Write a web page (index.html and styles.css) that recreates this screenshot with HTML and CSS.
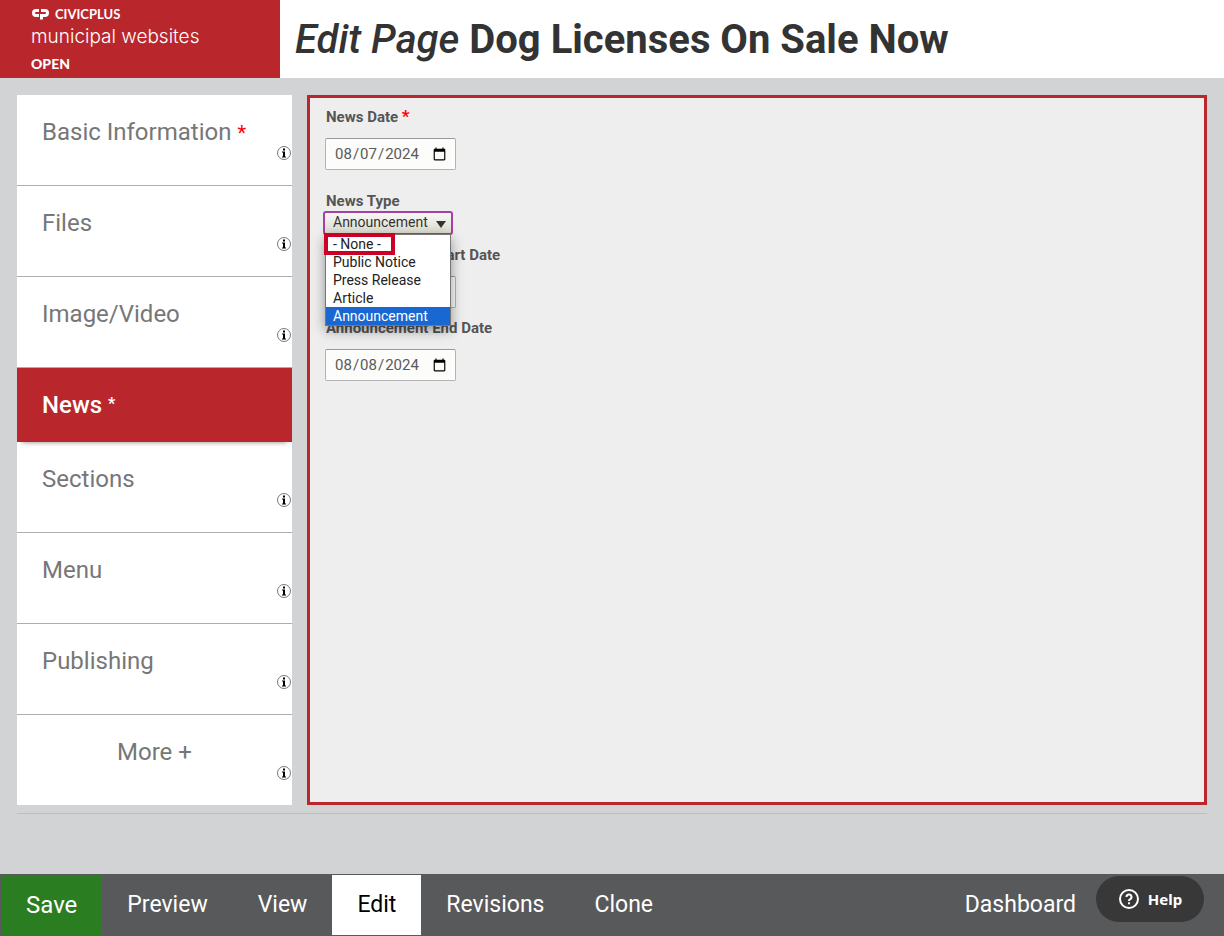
FILE: index.html
```html
<!DOCTYPE html>
<html lang="en">
<head>
    <meta charset="UTF-8">
    <meta name="viewport" content="width=device-width, initial-scale=1.0">
    <title>Edit Page Dog Licenses On Sale Now</title>
    <link rel="stylesheet" href="styles.css">
</head>
<body>
    <header class="header">
        <a class="brand" href="#">
            <span class="brand-top">
                <svg class="brand-icon" width="18" height="12" viewBox="0 0 18 12" aria-hidden="true">
                    <path d="M8 2.500H5a2.500 2.500 0 0 0 0 5h3M10 2.500h4a2.500 2.500 0 0 1 0 5h-3.500V11.500" fill="none" stroke="#fff" stroke-width="3"/>
                </svg>
                CIVICPLUS
            </span>
            <span class="brand-name">municipal websites</span>
            <span class="brand-open">OPEN</span>
        </a>
        <h1 class="title"><em>Edit Page</em> Dog Licenses On Sale Now</h1>
    </header>

    <main class="main">
        <div class="columns">
            <nav class="tabs">
                <a class="tab" href="#"><span>Basic Information <span class="required">*</span></span><svg class="info"><use href="#info"/></svg></a>
                <a class="tab" href="#">Files<svg class="info"><use href="#info"/></svg></a>
                <a class="tab" href="#">Image/Video<svg class="info"><use href="#info"/></svg></a>
                <a class="tab active" href="#"><span>News <span class="star">*</span></span></a>
                <a class="tab" href="#">Sections<svg class="info"><use href="#info"/></svg></a>
                <a class="tab" href="#">Menu<svg class="info"><use href="#info"/></svg></a>
                <a class="tab" href="#">Publishing<svg class="info"><use href="#info"/></svg></a>
                <a class="tab more" href="#">More +<svg class="info"><use href="#info"/></svg></a>
            </nav>

            <form class="panel" id="page-form">
                <div class="field first">
                    <label for="news-date">News Date <span class="required">*</span></label>
                    <input type="date" id="news-date" value="2024-08-07">
                </div>
                <div class="field">
                    <label for="news-type">News Type</label>
                    <div class="select-wrap">
                        <select id="news-type">
                            <option>- None -</option>
                            <option>Public Notice</option>
                            <option>Press Release</option>
                            <option>Article</option>
                            <option selected>Announcement</option>
                        </select>
                        <svg class="arrow" width="10" height="7" viewBox="0 0 10 7"><path d="M0 0h10L5 7z" fill="#333"/></svg>
                        <ul class="options" role="listbox" aria-label="News Type">
                            <li class="boxed" role="option">- None -</li>
                            <li role="option">Public Notice</li>
                            <li role="option">Press Release</li>
                            <li role="option">Article</li>
                            <li class="selected" role="option" aria-selected="true">Announcement</li>
                        </ul>
                    </div>
                </div>
                <div class="field">
                    <label for="start-date">Announcement Start Date</label>
                    <input type="date" id="start-date" value="2024-08-07">
                </div>
                <div class="field">
                    <label for="end-date">Announcement End Date</label>
                    <input type="date" id="end-date" value="2024-08-08">
                </div>
            </form>
        </div>
        <hr class="divider">
    </main>

    <footer class="toolbar">
        <button class="save" type="submit" form="page-form">Save</button>
        <a href="#">Preview</a>
        <a href="#">View</a>
        <a class="current" href="#">Edit</a>
        <a href="#">Revisions</a>
        <a href="#">Clone</a>
        <a class="dashboard" href="#">Dashboard</a>
        <button class="help" type="button">
            <svg width="22" height="22" viewBox="0 0 22 22" fill="none" stroke="#fff" stroke-width="2" aria-hidden="true">
                <circle cx="11" cy="11" r="9"/>
                <path d="M8.500 9a2.500 2.500 0 1 1 3.700 2.200c-.8.400-1.200.8-1.200 1.800"/>
                <path d="M11 14.300v2"/>
            </svg>
            Help
        </button>
    </footer>

    <svg class="symbols">
        <symbol id="info" viewBox="0 0 14 14">
            <circle cx="7" cy="7" r="6.500" fill="#fff" stroke="#555" stroke-width="0.800"/>
            <path d="M6 2.500h2v2H6zM5 5.500h3v5h1v1H5v-1h1v-4H5z" fill="#000"/>
        </symbol>
    </svg>
</body>
</html>
```
FILE: styles.css
```css
* {
    box-sizing: border-box;
}
body {
    margin: 0;
    min-height: 100vh;
    display: flex;
    flex-direction: column;
    background-color: #d1d3d4;
    font-family: Roboto, "Liberation Sans", sans-serif;
    color: #333;
}
a {
    text-decoration: none;
}
.header {
    display: flex;
    background-color: #fff;
}
.brand {
    width: 280px;
    padding: 6px 0 0 31px;
    display: flex;
    flex-direction: column;
    background-color: #b9272c;
    color: #fff;
    font-family: Lato, sans-serif;
}
.brand-top {
    display: flex;
    align-items: center;
    gap: 6px;
    font-size: 13px;
    font-weight: bold;
    line-height: 16px;
}
.brand-name {
    font-family: Inter, sans-serif;
    font-weight: 300;
    font-size: 19px;
    line-height: 30px;
}
.brand-open {
    margin-top: 4px;
    font-size: 14px;
    font-weight: 900;
    line-height: 16px;
}
.title {
    margin: 0;
    padding: 2px 0 0 15px;
    font-size: 40px;
    font-weight: bold;
    line-height: 76px;
}
.title em {
    font-weight: 500;
}
.main {
    padding: 17px 17px 0;
}
.columns {
    display: flex;
    gap: 15px;
}
.tabs {
    width: 275px;
    background-color: #fff;
}
.tab {
    display: flex;
    flex-direction: column;
    padding: 23px 25px 25px;
    border-bottom: 1px solid #adadad;
    color: #777;
    font-size: 24px;
    line-height: 28px;
}
.tab:last-child {
    border-bottom: none;
}
.info {
    width: 14px;
    height: 14px;
    align-self: flex-end;
    margin-right: -24px;
}
.active {
    padding-bottom: 23px;
    border-bottom: none;
    background-color: #b9272c;
    color: #fff;
    font-weight: 500;
    box-shadow: 0 5px 5px -5px rgba(0,0,0,0.5);
}
.more {
    text-align: center;
}
.required {
    color: #f00;
    line-height: 1;
}
.tab .required {
    font-size: 20px;
}
.star {
    font-size: 16px;
    font-weight: bold;
    line-height: 1;
    vertical-align: 4px;
}
.panel {
    flex: 1;
    padding: 10px 15px;
    border: 3px solid #b9272c;
    background-color: #eee;
}
.field {
    margin-bottom: 11px;
}
.first {
    margin-bottom: 22px;
}
.field label {
    display: block;
    padding-left: 1px;
    color: #555;
    font-size: 15px;
    font-weight: bold;
    line-height: 18px;
}
.field .required {
    font-size: 17px;
}
input[type="date"] {
    display: block;
    width: 131px;
    height: 32px;
    margin-top: 12px;
    padding: 0 6px 0 8px;
    border: 1px solid #b3b3b3;
    border-top-color: #999;
    border-radius: 2px;
    background-color: #fcfcfa;
    color: #5a5a5a;
    font-family: inherit;
    font-size: 15px;
}
.select-wrap {
    position: relative;
    width: 130px;
    margin: 1px 0 0 -2px;
}
select {
    display: block;
    width: 100%;
    height: 24px;
    padding: 0 8px 2px;
    appearance: none;
    border: 2px solid #a63fa6;
    border-radius: 3px;
    background: linear-gradient(#f8f8f5, #dcdcd0);
    color: #333;
    font-family: inherit;
    font-size: 14px;
}
.arrow {
    position: absolute;
    right: 7px;
    top: 10px;
}
.options {
    position: absolute;
    top: 23px;
    left: 2px;
    width: 126px;
    margin: 0;
    padding: 0;
    border: 1px solid #767676;
    background-color: #fff;
    box-shadow: 0 4px 12px rgba(0,0,0,0.4);
    color: #222;
    font-size: 14px;
    line-height: 18px;
    list-style: none;
}
.options li {
    padding-left: 7px;
}
.options .boxed {
    width: 67px;
    outline: 4px solid #cb0025;
    outline-offset: -2px;
}
.options .selected {
    background-color: #1967d2;
    color: #fff;
}
.divider {
    margin: 8px 0 0;
    border: none;
    border-top: 1px solid #bcbec0;
}
.toolbar {
    display: flex;
    align-items: stretch;
    margin-top: auto;
    padding: 1px 20px 1px 1px;
    background-color: #58595b;
}
.toolbar a, .save {
    padding: 0 25px;
    border: none;
    background: none;
    color: #fff;
    font-family: inherit;
    font-size: 23px;
    line-height: 60px;
}
.toolbar .save {
    background-color: #2b7d22;
    font-size: 24px;
}
.toolbar .current {
    background-color: #fff;
    color: #000;
}
.toolbar .dashboard {
    margin-left: auto;
    padding-right: 20px;
}
.help {
    display: flex;
    align-items: center;
    justify-content: center;
    gap: 8px;
    width: 108px;
    height: 46px;
    margin-top: 1px;
    border: none;
    border-radius: 23px;
    background-color: #383838;
    color: #fff;
    font-family: "Noto Sans", sans-serif;
    font-size: 15px;
    font-weight: bold;
}
.symbols {
    display: none;
}
```
